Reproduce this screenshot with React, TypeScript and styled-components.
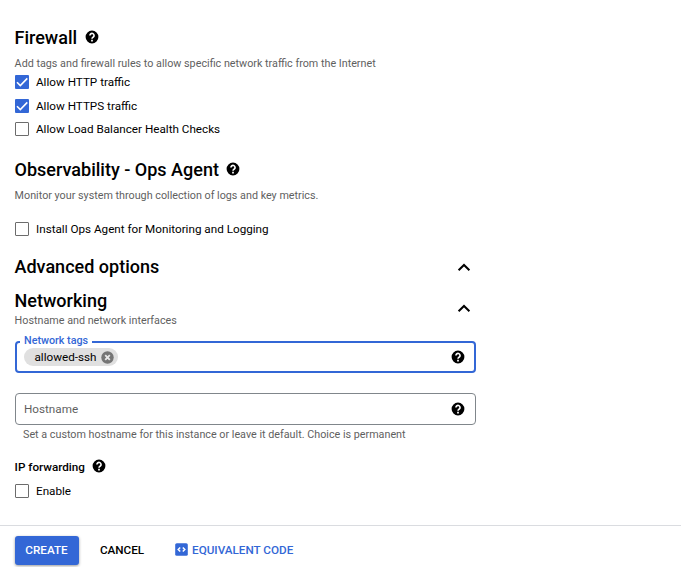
import React from 'react';
import styled, { createGlobalStyle } from 'styled-components';

const BLUE = '#3367d6';

const GlobalStyle = createGlobalStyle`
  *, *::before, *::after { box-sizing: border-box; }
  body {
    margin: 0;
    background: #fff;
    color: #000;
    font-family: Roboto, sans-serif;
    overflow: hidden;
  }
`;

const Page = styled.div`
  display: flex;
  flex-direction: column;
  width: 681px;
  height: 567px;
  overflow: hidden;
`;

const Form = styled.main`
  width: 476px;
  height: 525px;
  flex: none;
  padding: 26px 0 0 15px;
`;

const Section = styled.section<{ $gap: number }>`
  margin-bottom: ${(p) => p.$gap}px;
`;

const Icon = styled.svg`
  display: block;
  flex: none;
`;

const TitleRow = styled.div<{ $gap?: number }>`
  display: flex;
  align-items: center;
  gap: ${(p) => p.$gap ?? 6.4}px;
  height: 24px;

  ${Icon} {
    margin-bottom: 2px;
  }
`;

const Title = styled.h2`
  margin: 0 0 0 -0.5px;
  font-size: 18.03px;
  line-height: 24px;
  font-weight: 500;
  white-space: nowrap;
`;

const Description = styled.p<{ $top?: number; $left?: number }>`
  margin: ${(p) => p.$top ?? 0}px 0 0 ${(p) => p.$left ?? -0.4}px;
  font-size: 10.78px;
  line-height: 16px;
  color: #5f5f5f;
  white-space: nowrap;
`;

const CheckList = styled.div<{ $top: number }>`
  display: grid;
  grid-auto-rows: 23.5px;
  margin-top: ${(p) => p.$top}px;
`;

const CheckRow = styled.label`
  display: flex;
  align-items: center;
  gap: 7px;
  font-size: 11.7px;
  white-space: nowrap;
`;

const Box = styled.span<{ $on?: boolean }>`
  display: flex;
  width: 14px;
  height: 14px;
  border-radius: 1px;
  border: ${(p) => (p.$on ? 'none' : '1px solid #6c6c6c')};
  background: ${(p) => (p.$on ? BLUE : '#fff')};
`;

const PanelHeader = styled.header<{ $height: number }>`
  display: flex;
  align-items: center;
  justify-content: space-between;
  height: ${(p) => p.$height}px;
  padding-right: 4px;
`;

const PanelHeading = styled.div`
  padding-top: 2px;
`;

const Field = styled.fieldset<{ $focused?: boolean }>`
  display: block;
  min-width: 0;
  width: 461px;
  height: ${(p) => (p.$focused ? 38 : 32)}px;
  margin: ${(p) => (p.$focused ? '-2px 0 0' : '0')};
  padding: 0;
  border: ${(p) => (p.$focused ? `2px solid ${BLUE}` : '1px solid #80868b')};
  border-radius: 4px;
`;

const Legend = styled.legend`
  height: 14px;
  margin-left: 3px;
  padding: 0 4px;
  font-size: 10.75px;
  line-height: 11px;
  font-weight: 500;
  color: ${BLUE};
`;

const FieldBody = styled.div<{ $focused?: boolean }>`
  display: flex;
  align-items: center;
  justify-content: space-between;
  height: ${(p) => (p.$focused ? 18 : 30)}px;
  margin-top: ${(p) => (p.$focused ? -1 : 0)}px;
  padding: 0 ${(p) => (p.$focused ? '8px 0 7px' : '9px 0 8px')};
`;

const Chip = styled.span`
  display: flex;
  align-items: center;
  justify-content: space-between;
  width: 94px;
  height: 18px;
  padding: 0 4px 0 10.5px;
  border-radius: 9px;
  background: #e0e0e0;
  font-size: 11.7px;
`;

const Placeholder = styled.span`
  font-size: 11.7px;
  color: #5f5f5f;
`;

const SubTitle = styled.h3`
  margin: 0 0 0 -0.4px;
  font-size: 11.7px;
  font-weight: 500;
`;

const Footer = styled.footer`
  display: flex;
  align-items: flex-start;
  height: 42px;
  padding: 10px 0 0 15px;
  border-top: 1px solid #dadce0;
`;

const Button = styled.button<{ $kind: 'primary' | 'plain' | 'link' }>`
  display: flex;
  align-items: center;
  justify-content: center;
  gap: 4.3px;
  height: 29px;
  padding: ${(p) => (p.$kind === 'primary' ? '0 1px 2px 0' : '0 0 2px')};
  border: 0;
  border-radius: 3px;
  font: 500 11.7px Roboto, sans-serif;
  white-space: nowrap;
  width: ${(p) => ({ primary: '64px', plain: '86px', link: '126px' })[p.$kind]};
  margin-left: ${(p) => (p.$kind === 'link' ? 6 : 0)}px;
  color: ${(p) => ({ primary: '#fff', plain: '#000', link: BLUE })[p.$kind]};
  background: ${(p) => (p.$kind === 'primary' ? BLUE : 'transparent')};
  box-shadow: ${(p) => (p.$kind === 'primary' ? '0 1px 3px rgba(0, 0, 0, 0.4)' : 'none')};
`;

const HelpIcon = () => (
  <Icon width="16" height="16" viewBox="0 0 24 24">
    <path d="M12 2.4a9.6 9.6 0 1 0 0 19.2 9.6 9.6 0 0 0 0-19.2z" />
    <path
      d="M8.9 9.6a3.1 3 0 1 1 5 2.4c-1.2.8-1.9 1.3-1.9 2.7"
      fill="none"
      stroke="#fff"
      strokeWidth="2.4"
    />
    <path d="M10.7 16.1h2.6v2.6h-2.6z" fill="#fff" />
  </Icon>
);

const ChevronUp = () => (
  <Icon width="16" height="16" viewBox="0 0 16 16">
    <path d="M2.6 11.3 8 6l5.4 5.3" fill="none" stroke="#000" strokeWidth="2" />
  </Icon>
);

const ClearIcon = () => (
  <Icon width="13" height="13" viewBox="0 0 13 13">
    <circle cx="6.5" cy="6.5" r="6.2" fill="#757575" />
    <path d="m4.2 4.2 4.6 4.6m0-4.6L4.2 8.8" stroke="#e8e8e8" strokeWidth="1.8" />
  </Icon>
);

const CodeIcon = () => (
  <Icon width="13" height="13" viewBox="0 0 13 13">
    <rect x="0.2" y="0.2" width="12.6" height="12.6" rx="1.6" fill={BLUE} />
    <path d="M5.2 4.5 3.2 6.5l2 2M7.8 4.5l2 2-2 2" fill="none" stroke="#fff" strokeWidth="1.5" />
  </Icon>
);

const Check = ({ label, on }: { label: string; on?: boolean }) => (
  <CheckRow>
    <Box $on={on}>
      {on && (
        <Icon width="14" height="14" viewBox="0 0 14 14">
          <path d="m2 7.2 3.3 3.3 7-7.1" fill="none" stroke="#fff" strokeWidth="1.6" />
        </Icon>
      )}
    </Box>
    {label}
  </CheckRow>
);

export default function App() {
  return (
    <Page>
      <GlobalStyle />
      <Form>
        <Section $gap={17.2}>
          <TitleRow $gap={7}>
            <Title>Firewall</Title>
            <HelpIcon />
          </TitleRow>
          <Description $top={6}>
            Add tags and firewall rules to allow specific network traffic from the Internet
          </Description>
          <CheckList $top={-1.7}>
            <Check label="Allow HTTP traffic" on />
            <Check label="Allow HTTPS traffic" on />
            <Check label="Allow Load Balancer Health Checks" />
          </CheckList>
        </Section>
        <Section $gap={14.25}>
          <TitleRow>
            <Title>Observability - Ops Agent</Title>
            <HelpIcon />
          </TitleRow>
          <Description $top={6}>
            Monitor your system through collection of logs and key metrics.
          </Description>
          <CheckList $top={13.25}>
            <Check label="Install Ops Agent for Monitoring and Logging" />
          </CheckList>
        </Section>
        <PanelHeader $height={24}>
          <Title>Advanced options</Title>
          <ChevronUp />
        </PanelHeader>
        <Section $gap={20}>
          <PanelHeader $height={58}>
            <PanelHeading>
              <Title>Networking</Title>
              <Description>Hostname and network interfaces</Description>
            </PanelHeading>
            <ChevronUp />
          </PanelHeader>
          <Field $focused>
            <Legend>Network tags</Legend>
            <FieldBody $focused>
              <Chip>
                allowed-ssh
                <ClearIcon />
              </Chip>
              <HelpIcon />
            </FieldBody>
          </Field>
        </Section>
        <Section $gap={12}>
          <Field>
            <FieldBody>
              <Placeholder>Hostname</Placeholder>
              <HelpIcon />
            </FieldBody>
          </Field>
          <Description $top={2} $left={8}>
            Set a custom hostname for this instance or leave it default. Choice is permanent
          </Description>
        </Section>
        <TitleRow>
          <SubTitle>IP forwarding</SubTitle>
          <HelpIcon />
        </TitleRow>
        <CheckList $top={0.25}>
          <Check label="Enable" />
        </CheckList>
      </Form>
      <Footer>
        <Button $kind="primary">CREATE</Button>
        <Button $kind="plain">CANCEL</Button>
        <Button $kind="link">
          <CodeIcon />
          EQUIVALENT CODE
        </Button>
      </Footer>
    </Page>
  );
}
